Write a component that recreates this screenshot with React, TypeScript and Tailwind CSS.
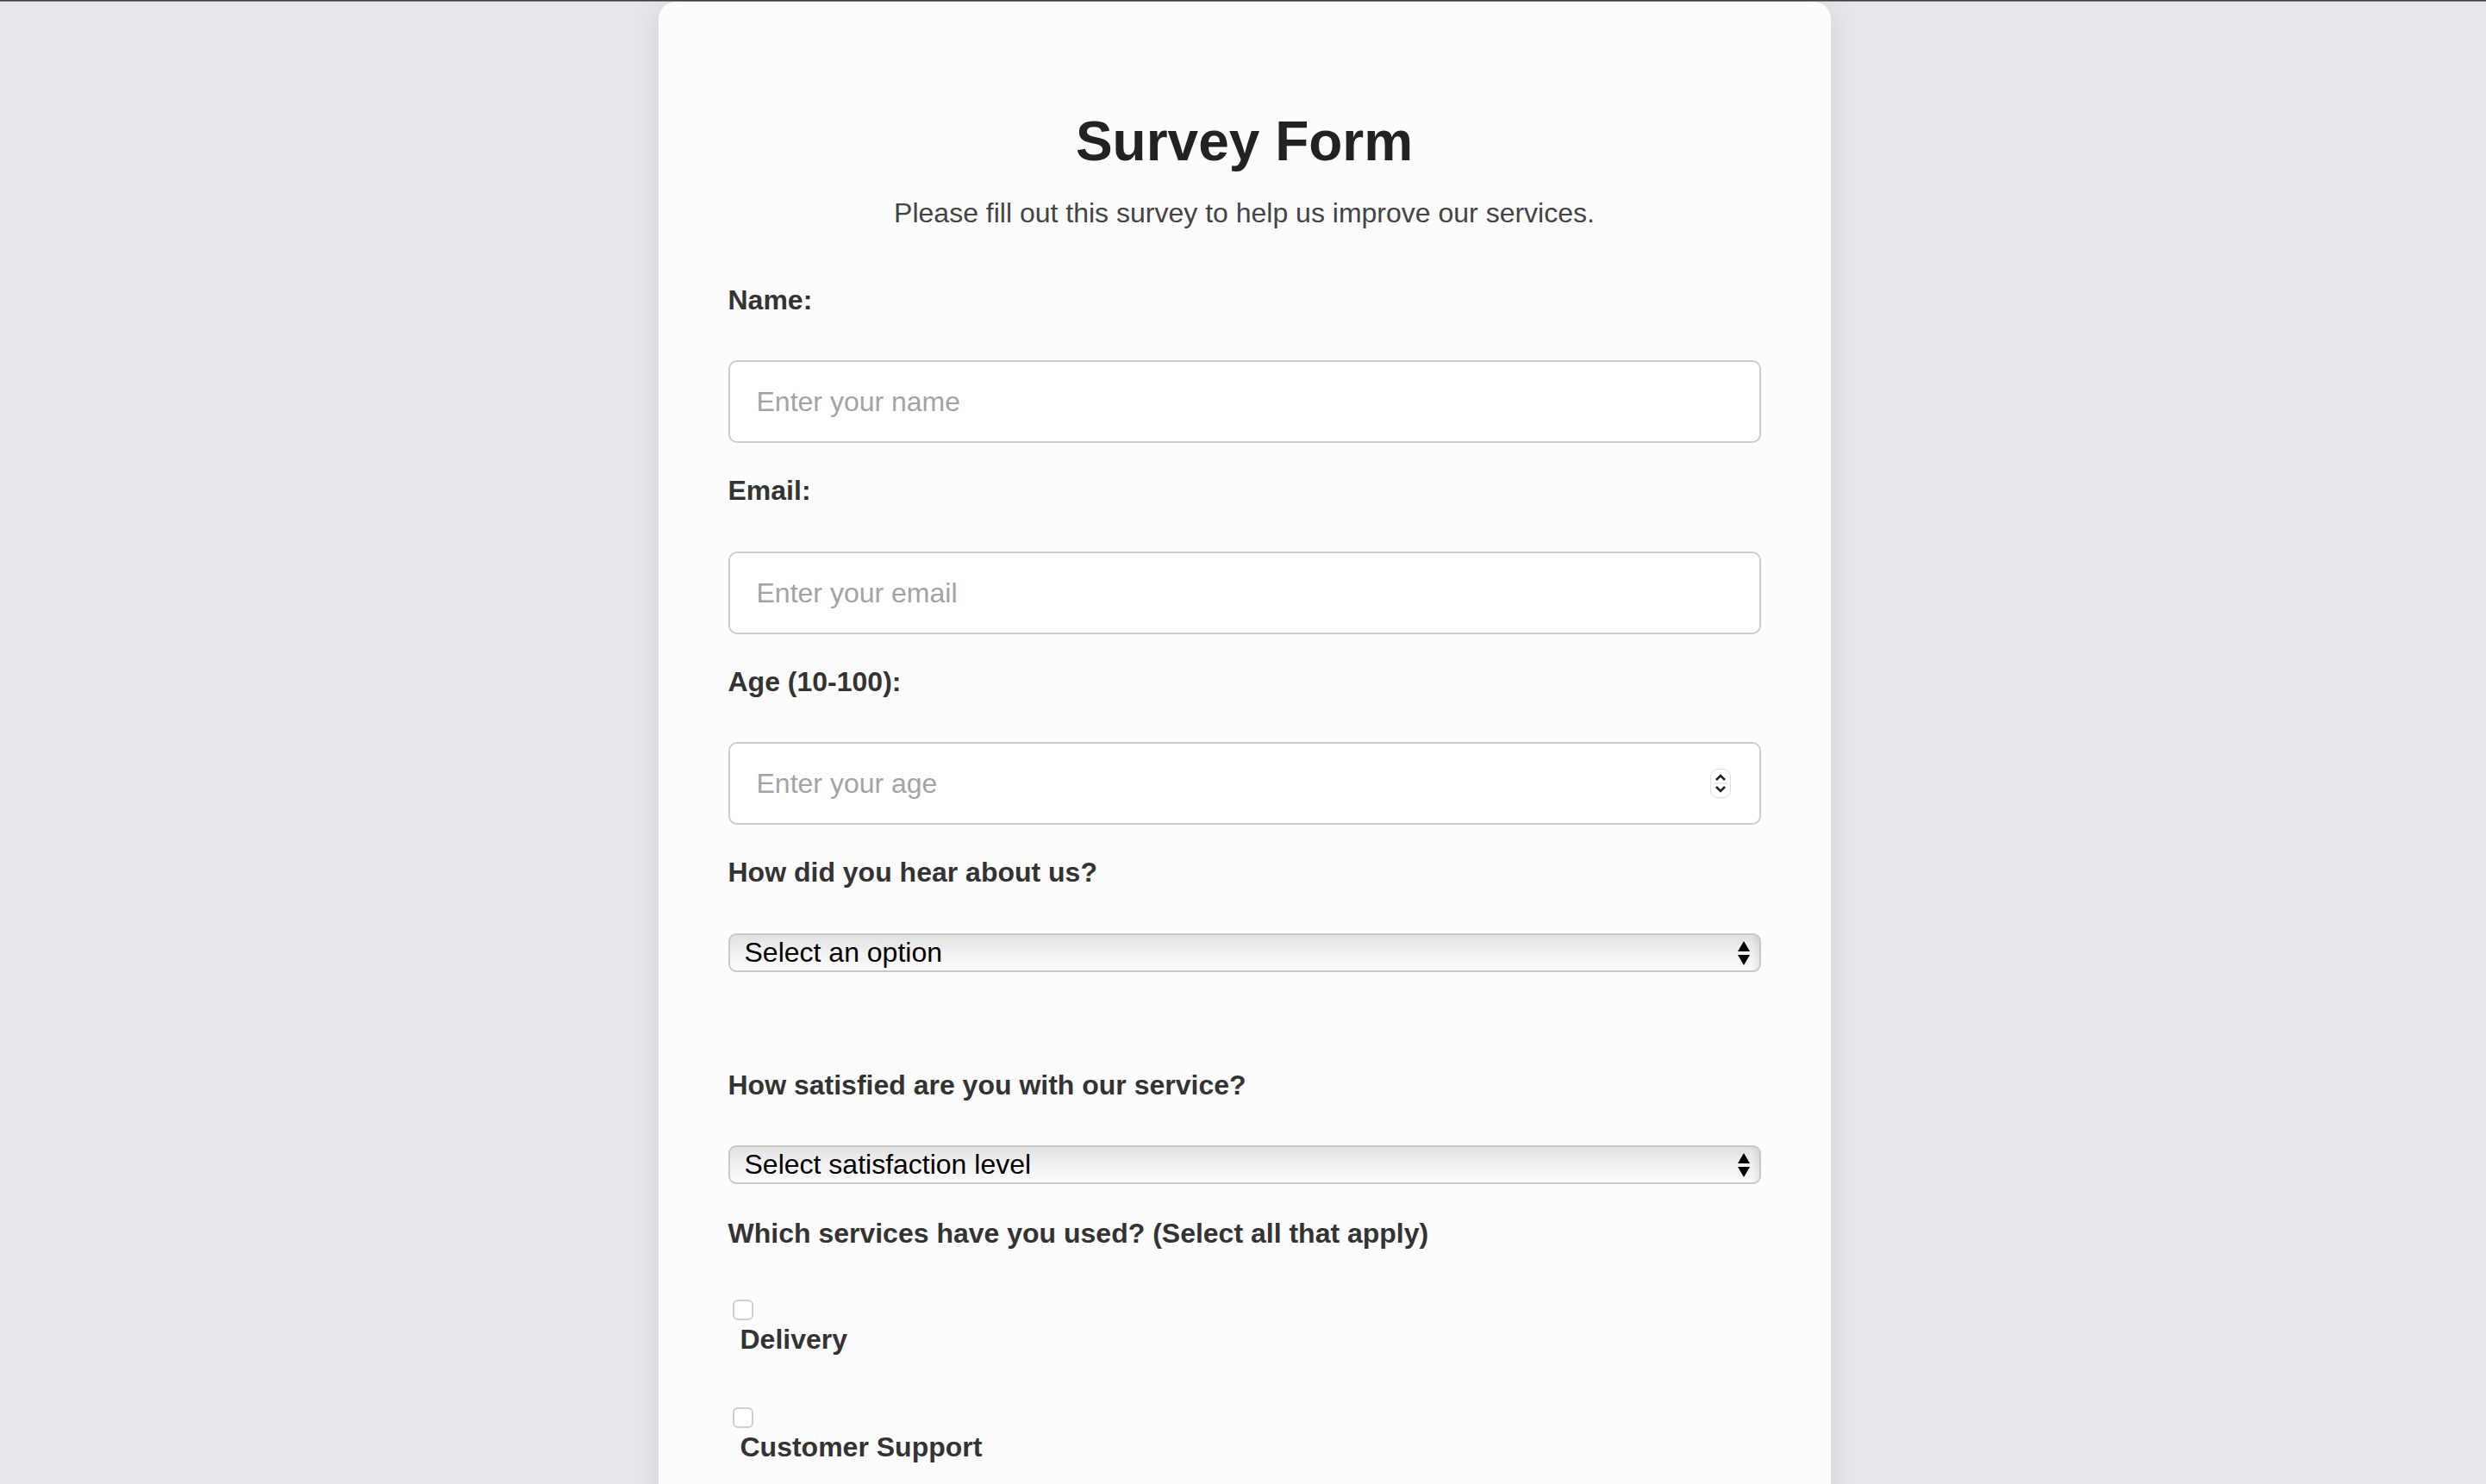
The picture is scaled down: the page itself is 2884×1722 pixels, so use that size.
import React from "react";

const font = { fontFamily: '"Liberation Sans", Arial, Helvetica, sans-serif' };

function Label({ children, className = "" }: { children: React.ReactNode; className?: string }) {
  return (
    <label className={`block text-[32px] leading-[36px] font-bold text-[#333333] ${className}`}>{children}</label>
  );
}

function TextInput({ placeholder, className = "" }: { placeholder: string; className?: string }) {
  return (
    <input
      type="text"
      placeholder={placeholder}
      className={`block w-full h-[96px] rounded-[10px] border-2 border-[#cccccc] bg-white pl-[31px] pr-[20px] text-[32px] text-[#333] placeholder:text-[#a3a3a3] outline-none ${className}`}
      style={font}
    />
  );
}

function FakeSelect({ text, className = "" }: { text: string; className?: string }) {
  return (
    <div className={`relative w-full h-[45px] ${className}`}>
      <select
        className="block w-full h-full appearance-none rounded-[9px] border-2 border-[#c9c9c9] bg-gradient-to-b from-[#e2e2e2] via-[#f1f1f1] to-[#fbfbfb] pl-[17px] text-[32px] leading-[41px] text-black outline-none shadow-[inset_-10px_0_8px_-8px_rgba(0,0,0,0.12)]"
        style={font}
        defaultValue=""
      >
        <option value="">{text}</option>
      </select>
      <svg className="absolute right-[12px] top-[9px]" width="16" height="28" viewBox="0 0 16 28">
        <path d="M8 0 L15 12 L1 12 Z" fill="#000" />
        <path d="M1 16 L15 16 L8 28 Z" fill="#000" />
      </svg>
    </div>
  );
}

function Check({ label, className = "" }: { label: string; className?: string }) {
  return (
    <div className={className}>
      <div className="ml-[5px] w-[24px] h-[24px] rounded-[6px] border-2 border-[#cfcfcf] bg-white" />
      <div className="mt-[4px] ml-[14px] text-[32px] leading-[36px] font-bold text-[#333333]">{label}</div>
    </div>
  );
}

export default function App() {
  return (
    <div className="min-h-[1722px] bg-[#e6e8ec] overflow-hidden" style={font}>
      <div className="h-[1px] bg-[#3c3c3c]" />
      <div className="h-[1px] bg-[#8a8a8a]" />
      <div className="flex justify-center pl-[3px]">
        <div className="w-[1360px] min-h-[1760px] rounded-[20px] bg-[#fcfcfc] shadow-[0_0_40px_rgba(0,0,0,0.10)] px-[81px] pt-[125px]">
          <h1 className="text-center text-[64px] leading-[74px] font-bold text-[#222222]">Survey Form</h1>
          <p className="mt-[28px] text-center text-[32px] leading-[36px] text-[#444444]">
            Please fill out this survey to help us improve our services.
          </p>

          <Label className="mt-[65px]">Name:</Label>
          <TextInput placeholder="Enter your name" className="mt-[52px]" />

          <Label className="mt-[37px]">Email:</Label>
          <TextInput placeholder="Enter your email" className="mt-[53px]" />

          <Label className="mt-[37px]">Age (10-100):</Label>
          <div className="relative mt-[52px]">
            <TextInput placeholder="Enter your age" />
            <div className="absolute right-[35px] top-[31px] w-[24px] h-[34px] rounded-[9px] border border-[#e0e0e0] bg-white shadow-[0_1px_2px_rgba(0,0,0,0.06)] flex items-center justify-center">
              <svg width="16" height="30" viewBox="0 0 16 30">
                <path d="M3 11 L8 6 L13 11" stroke="#222" strokeWidth="2.6" fill="none" />
                <line x1="0" y1="15" x2="16" y2="15" stroke="#e2e2e2" strokeWidth="1.5" />
                <path d="M3 19 L8 24 L13 19" stroke="#222" strokeWidth="2.6" fill="none" />
              </svg>
            </div>
          </div>

          <Label className="mt-[37px]">How did you hear about us?</Label>
          <FakeSelect text="Select an option" className="mt-[53px]" />

          <Label className="mt-[113px]">How satisfied are you with our service?</Label>
          <FakeSelect text="Select satisfaction level" className="mt-[52px]" />

          <Label className="mt-[39px]">Which services have you used? (Select all that apply)</Label>
          <Check label="Delivery" className="mt-[59px]" />
          <Check label="Customer Support" className="mt-[61px]" />
        </div>
      </div>
    </div>
  );
}
